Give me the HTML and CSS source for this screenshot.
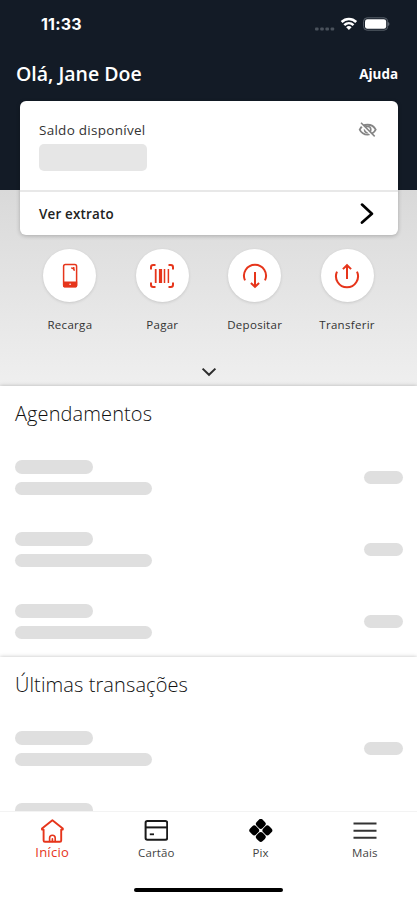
FILE: index.html
```html
<!DOCTYPE html>
<html lang="pt-BR">
<head>
<meta charset="utf-8">
<title>Início</title>
<link rel="stylesheet" href="styles.css">
</head>
<body>
<div class="app">
  <header class="hero">
    <div class="status">
      <span class="clock">11:33</span>
      <div class="indicators">
        <svg width="20" height="4" viewBox="0 0 20 4" fill="#4a525c"><rect x="0" y="0.5" width="3.6" height="3" rx="1"/><rect x="5.2" y="0.5" width="3.6" height="3" rx="1"/><rect x="10.4" y="0.5" width="3.6" height="3" rx="1"/><rect x="15.6" y="0.5" width="3.6" height="3" rx="1"/></svg>
        <svg class="wifi" width="18" height="14" viewBox="0 0 18 14" fill="none" stroke="#fff" stroke-width="2.5"><path d="M1.6 5C5.7.9 12.1.9 16.2 5"/><path d="M4.3 8.1c2.7-2.6 6.5-2.6 9.2 0"/><path d="M8.9 13 6.2 10.2c1.5-1.5 3.9-1.5 5.4 0z" fill="#fff" stroke="none"/></svg>
        <svg class="battery" width="27" height="14" viewBox="0 0 27 14"><rect x=".6" y=".8" width="24" height="12.4" rx="3.6" fill="none" stroke="#59616b"/><rect x="2" y="2.2" width="21.2" height="9.6" rx="2.4" fill="#fff"/><path d="M25.4 5v4c1.2-.5 1.2-3.5 0-4z" fill="#89909a"/></svg>
      </div>
    </div>
    <div class="greeting">
      <h1>Olá, Jane Doe</h1>
      <span class="help">Ajuda</span>
    </div>
    <div class="card">
      <div class="balance">
        <div>
          <div class="balance-label">Saldo disponível</div>
          <div class="balance-value"></div>
        </div>
        <svg class="eye" width="20" height="16" viewBox="0 0 20 16" fill="none" stroke="#858585"><path d="M1.7 7.6C4.8 1.1 14.3 1.1 17.7 7.6C14.3 14.2 4.8 14.2 1.7 7.6z" stroke-width="1.8"/><circle cx="9.7" cy="7.6" r="3.1" stroke-width="1.7"/><path d="M2.5 2 15.6 15" stroke="#fff" stroke-width="2"/><path d="M3 .8 16.7 14.4" stroke-width="1.5"/></svg>
      </div>
      <div class="statement">
        <span>Ver extrato</span>
        <svg width="14" height="22" viewBox="0 0 14 22" fill="none" stroke="#000" stroke-width="2.7" stroke-linecap="round" stroke-linejoin="round"><path d="M2 1.6 11.9 10.8 2 19.6"/></svg>
      </div>
    </div>
    <div class="actions">
      <div class="action">
        <div class="disc"><svg width="26" height="26" viewBox="0 0 26 26" fill="none" stroke="#e6351b"><rect x="6.6" y="1.6" width="13" height="22.2" rx="1.8" stroke-width="1.5"/><path d="M6 18.5h14.2v4.3q0 1.5-1.5 1.5H7.5Q6 24.3 6 22.8z" fill="#e6351b" stroke="none"/><path d="M14.2 5q3 0 3.1 2.7M16 5h1.6" stroke-width="1.5"/><circle cx="13.1" cy="21.2" r=".8" fill="#fff" stroke="none"/></svg></div>
        <span>Recarga</span>
      </div>
      <div class="action">
        <div class="disc"><svg width="26" height="26" viewBox="0 0 26 26" fill="none" stroke="#e6351b" stroke-width="2"><path d="M2 6.5V4.2Q2 2 4.2 2H6.5M19.5 2h2.3Q24 2 24 4.2v2.3M24 19.5v2.3q0 2.2-2.2 2.2h-2.3M6.5 24H4.2Q2 24 2 21.8v-2.3"/><path d="M6.7 6v14" stroke-width="1.8"/><path d="M11.5 6v14" stroke-width="3.2"/><path d="M15.5 6v14M19.4 6v14" stroke-width="1.5"/></svg></div>
        <span>Pagar</span>
      </div>
      <div class="action">
        <div class="disc"><svg width="26" height="26" viewBox="0 0 26 26" fill="none" stroke="#e6351b" stroke-width="2"><path d="M3 17.3A11 11 0 1 1 23 17.3"/><path d="M13 9v14.4M8.9 20.1 13 23.8 17.1 20.1"/></svg></div>
        <span>Depositar</span>
      </div>
      <div class="action">
        <div class="disc"><svg width="26" height="26" viewBox="0 0 26 26" fill="none" stroke="#e6351b" stroke-width="2"><path d="M3 8.7A11 11 0 1 0 23 8.7"/><path d="M13 16V2.4M8.9 6.1 13 2.2 17.1 6.1"/></svg></div>
        <span>Transferir</span>
      </div>
    </div>
    <svg class="more" width="16" height="10" viewBox="0 0 16 10" fill="none" stroke="#2d2d2d" stroke-width="2"><path d="M1.6 1.6 8 7.8 14.4 1.6"/></svg>
  </header>

  <main>
    <section>
      <h2>Agendamentos</h2>
      <div class="row"><div class="lines"><i class="pill short"></i><i class="pill long"></i></div><i class="pill amount"></i></div>
      <div class="row"><div class="lines"><i class="pill short"></i><i class="pill long"></i></div><i class="pill amount"></i></div>
      <div class="row"><div class="lines"><i class="pill short"></i><i class="pill long"></i></div><i class="pill amount"></i></div>
    </section>
    <section class="recent">
      <h2>Últimas transações</h2>
      <div class="row"><div class="lines"><i class="pill short"></i><i class="pill long"></i></div><i class="pill amount"></i></div>
      <div class="row"><div class="lines"><i class="pill short"></i><i class="pill long"></i></div><i class="pill amount"></i></div>
    </section>
  </main>

  <footer>
    <nav>
      <a class="tab active">
        <svg width="24" height="24" viewBox="0 0 24 24" fill="none" stroke="#e6351b" stroke-width="1.9" stroke-linejoin="round" stroke-linecap="round"><path d="M2 10.6V9.4L12.4 1.2 22.8 9.4V10.6H21.2v10.9q0 1.3-1.3 1.3H4.9q-1.3 0-1.3-1.3V10.6z"/><path d="M9.6 22.5V19q0-2.7 2.8-2.7t2.8 2.7v3.5M12.4 19.8v2.7" stroke-width="1.6"/></svg>
        <span>Início</span>
      </a>
      <a class="tab">
        <svg width="24" height="24" viewBox="0 0 24 24" fill="none" stroke="#191919" stroke-width="2"><rect x="1.6" y="2" width="21.6" height="18.8" rx="1.8"/><path d="M1.4 8.4h22"/><path d="M5.8 15.3h4.2" stroke-width="1.8"/></svg>
        <span>Cartão</span>
      </a>
      <a class="tab">
        <svg width="24" height="24" viewBox="0 0 24 24"><g transform="translate(-.2 -.6) rotate(45 12 12)"><rect x="3.1" y="3.1" width="8.5" height="8.5" rx="2.7"/><rect x="12.4" y="3.1" width="8.5" height="8.5" rx="2.7"/><rect x="3.1" y="12.4" width="8.5" height="8.5" rx="2.7"/><rect x="12.4" y="12.4" width="8.5" height="8.5" rx="2.7"/></g></svg>
        <span>Pix</span>
      </a>
      <a class="tab">
        <svg width="24" height="24" viewBox="0 0 24 24" stroke="#333" stroke-width="2"><path d="M.5 4.6h23M.5 11.8h23M.5 18.8h23"/></svg>
        <span>Mais</span>
      </a>
    </nav>
    <div class="home-bar"></div>
  </footer>
</div>
</body>
</html>
```
FILE: styles.css
```css
* { box-sizing: border-box; }
body {
  margin: 0;
  background: #fff;
  color: #333;
  font-family: "Open Sans", "Noto Sans", sans-serif;
}
.app {
  width: 417px;
  height: 900px;
  display: flex;
  flex-direction: column;
  overflow: hidden;
}
svg { display: block; flex: none; }

.hero {
  flex: none;
  height: 386px;
  background:
    linear-gradient(#131b26, #131b26) 0 0 / 100% 190px no-repeat,
    linear-gradient(#d9d9d9 190px, #efefef 386px);
}
.status {
  height: 48px;
  padding: 0 27px 0 41px;
  display: flex;
  align-items: center;
  justify-content: space-between;
}
.clock {
  color: #fff;
  font: 700 16px/20px Inter, sans-serif;
  letter-spacing: .2px;
}
.indicators { display: flex; align-items: center; }
.indicators svg:first-child { margin-top: 9px; }
.wifi { margin-left: 5px; }
.battery { margin-left: 5px; }
.greeting {
  height: 53px;
  padding: 0 19px 2px 16px;
  display: flex;
  align-items: center;
  justify-content: space-between;
  color: #fff;
}
h1 { margin: 0; font-size: 19.5px; line-height: 26px; font-weight: 600; }
.help { font-size: 13.4px; font-weight: 700; }

.card {
  height: 134px;
  margin: 0 19px 0 20px;
  background: #fff;
  border-radius: 6px;
  box-shadow: 0 1px 4px rgba(0, 0, 0, .24);
}
.balance {
  height: 91px;
  padding: 20px 20px 0 19px;
  display: flex;
  justify-content: space-between;
  border-bottom: 2px solid #e8e8e8;
}
.balance-label { font-size: 13.5px; line-height: 18px; letter-spacing: .27px; }
.balance-value {
  width: 108px;
  height: 27px;
  margin-top: 5px;
  border-radius: 5px;
  background: #e6e6e6;
}
.eye { margin-top: 1px; }
.statement {
  height: 43px;
  padding: 0 24px 0 19px;
  display: flex;
  align-items: center;
  justify-content: space-between;
  font-size: 13.4px;
  font-weight: 550;
  letter-spacing: .2px;
  color: #222;
}
.actions {
  display: grid;
  grid-template-columns: repeat(4, 92.4px);
  justify-content: center;
  padding-top: 14px;
}
.action { display: flex; flex-direction: column; align-items: center; font-size: 11.5px; font-weight: 500; letter-spacing: .3px; }
.action span { margin-top: 15px; line-height: 16px; }
.disc {
  width: 53px;
  height: 53px;
  border-radius: 50%;
  background: #fff;
  display: grid;
  place-items: center;
  box-shadow: 0 1px 3px rgba(0, 0, 0, .13);
}
.more { margin: 34px auto 0; }

main { flex: 1; min-height: 0; overflow: hidden; box-shadow: 0 0 4px rgba(0, 0, 0, .25); background: #fff; }
section { height: 271px; padding: 14px 14px 0 15px; }
.recent { box-shadow: 0 0 4px rgba(0, 0, 0, .25); }
h2 { margin: 0 0 32px; font-size: 20px; line-height: 28px; font-weight: 300; letter-spacing: .1px; color: #111; }
.row { height: 72px; padding-bottom: 37px; display: flex; align-items: center; justify-content: space-between; }
.lines { display: flex; flex-direction: column; gap: 8px; }
.pill { display: block; height: 13.5px; border-radius: 7px; background: #dfdfdf; }
.short { width: 78px; }
.long { width: 137px; }
.amount { width: 39px; }

footer { flex: none; height: 89px; background: #fff; border-top: 1px solid #f3f3f3; }
nav { height: 76px; display: grid; grid-template-columns: repeat(4, 1fr); padding-top: 7px; }
.tab { display: flex; flex-direction: column; align-items: center; font-size: 11.5px; line-height: 16px; letter-spacing: .15px; color: #444; }
.tab span { margin-top: 2px; }
.active { color: #e6351b; font-size: 13px; letter-spacing: .25px; }
.active span { margin-top: 1px; }
.home-bar { width: 149px; height: 4px; margin: 0 auto; border-radius: 2px; background: #000; }
```
